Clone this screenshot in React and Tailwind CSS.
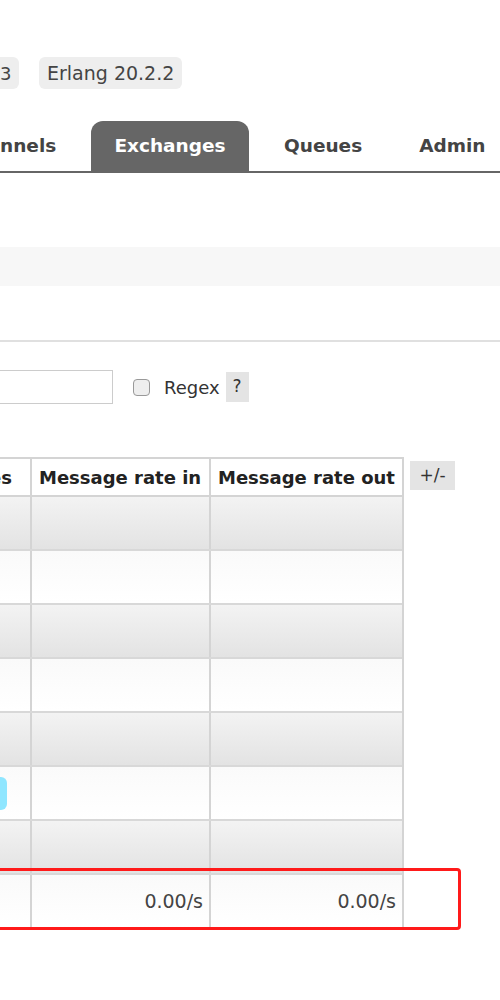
const rows = [
  { gray: true },
  { gray: false },
  { gray: true },
  { gray: false },
  { gray: true },
  { gray: false, tag: true },
  { gray: true },
  { gray: false, rateIn: "0.00/s", rateOut: "0.00/s" },
];

const App = () => {
  return (
    <div className="relative w-[500px] h-[1000px] overflow-hidden bg-white text-[#444] font-['DejaVu_Sans','Verdana',sans-serif]">
      {/* version badges */}
      <div className="flex pt-[57px]">
        <div className="w-[19px] h-[32px] bg-[#eee] rounded-r-md flex items-center text-[18px]">3</div>
        <div className="ml-[20px] h-[32px] px-[8px] bg-[#eee] rounded-md flex items-center text-[19px]">Erlang 20.2.2</div>
      </div>

      {/* tabs */}
      <div className="mt-[33px] h-[51px] flex items-end border-b-2 border-[#666] text-[18.5px] font-bold">
        <div className="w-[91px] h-[50px] flex items-center">nnels</div>
        <div className="w-[158px] h-[50px] bg-[#666] rounded-t-[12px] text-white flex items-center justify-center">Exchanges</div>
        <div className="ml-[35px] h-[50px] flex items-center">Queues</div>
        <div className="ml-[57px] h-[50px] flex items-center">Admin</div>
      </div>

      {/* grey strip */}
      <div className="mt-[74px] h-[39px] bg-[#f7f7f7]"></div>

      <div className="mt-[54px] h-[2px] bg-[#e0e0e0]"></div>

      {/* filter */}
      <div className="mt-[28px] flex items-center h-[34px]">
        <div className="w-[113px] h-[34px] border border-[#ccc] border-l-0 bg-white"></div>
        <div className="ml-[20px] w-[17px] h-[17px] rounded-[4px] border border-[#999] bg-[#eee]"></div>
        <div className="ml-[14px] text-[18px] text-[#333]">Regex</div>
        <div className="ml-[6px] w-[23px] h-[30px] bg-[#e4e4e4] flex items-center justify-center text-[17px] text-[#333]">?</div>
      </div>

      {/* table */}
      <div className="mt-[53px] flex items-start">
        <div className="w-[404px] border-r-2 border-[#d4d4d4]">
          <div className="flex h-[40px] border-t-2 border-b-2 border-[#d4d4d4] bg-white text-[18px] font-bold text-[#222]">
            <div className="w-[32px] border-r-2 border-[#d4d4d4] flex items-center justify-end pr-[18px] overflow-hidden">es</div>
            <div className="w-[179px] border-r-2 border-[#d4d4d4] flex items-center pl-[7px] whitespace-nowrap">Message rate in</div>
            <div className="flex-1 flex items-center pl-[7px] whitespace-nowrap">Message rate out</div>
          </div>
          {rows.map((r, i) => (
            <div
              key={i}
              className={
                "flex h-[54px] border-b-2 border-[#d8d8d8] text-[19px] text-[#444] " +
                (r.gray ? "bg-gradient-to-b from-[#f3f3f3] to-[#e3e3e3]" : "bg-gradient-to-b from-[#fafafa] to-[#ffffff]")
              }
            >
              <div className="w-[32px] border-r-2 border-[#d4d4d4] flex items-center">
                {r.tag && <div className="w-[7px] h-[33px] bg-[#8fe6ff] rounded-r-[6px]"></div>}
              </div>
              <div className="w-[179px] border-r-2 border-[#d4d4d4] flex items-center justify-end pr-[6px]">{r.rateIn}</div>
              <div className="flex-1 flex items-center justify-end pr-[6px]">{r.rateOut}</div>
            </div>
          ))}
        </div>
        <div className="ml-[6px] mt-[4px] w-[45px] h-[29px] bg-[#e4e4e4] flex items-center justify-center text-[17px] text-[#333]">+/-</div>
      </div>

      {/* annotation box */}
      <div className="absolute left-[-10px] top-[868px] w-[471px] h-[62px] border-[3px] border-[#ff1a1a] rounded-[4px]"></div>
    </div>
  );
};

export default App;
